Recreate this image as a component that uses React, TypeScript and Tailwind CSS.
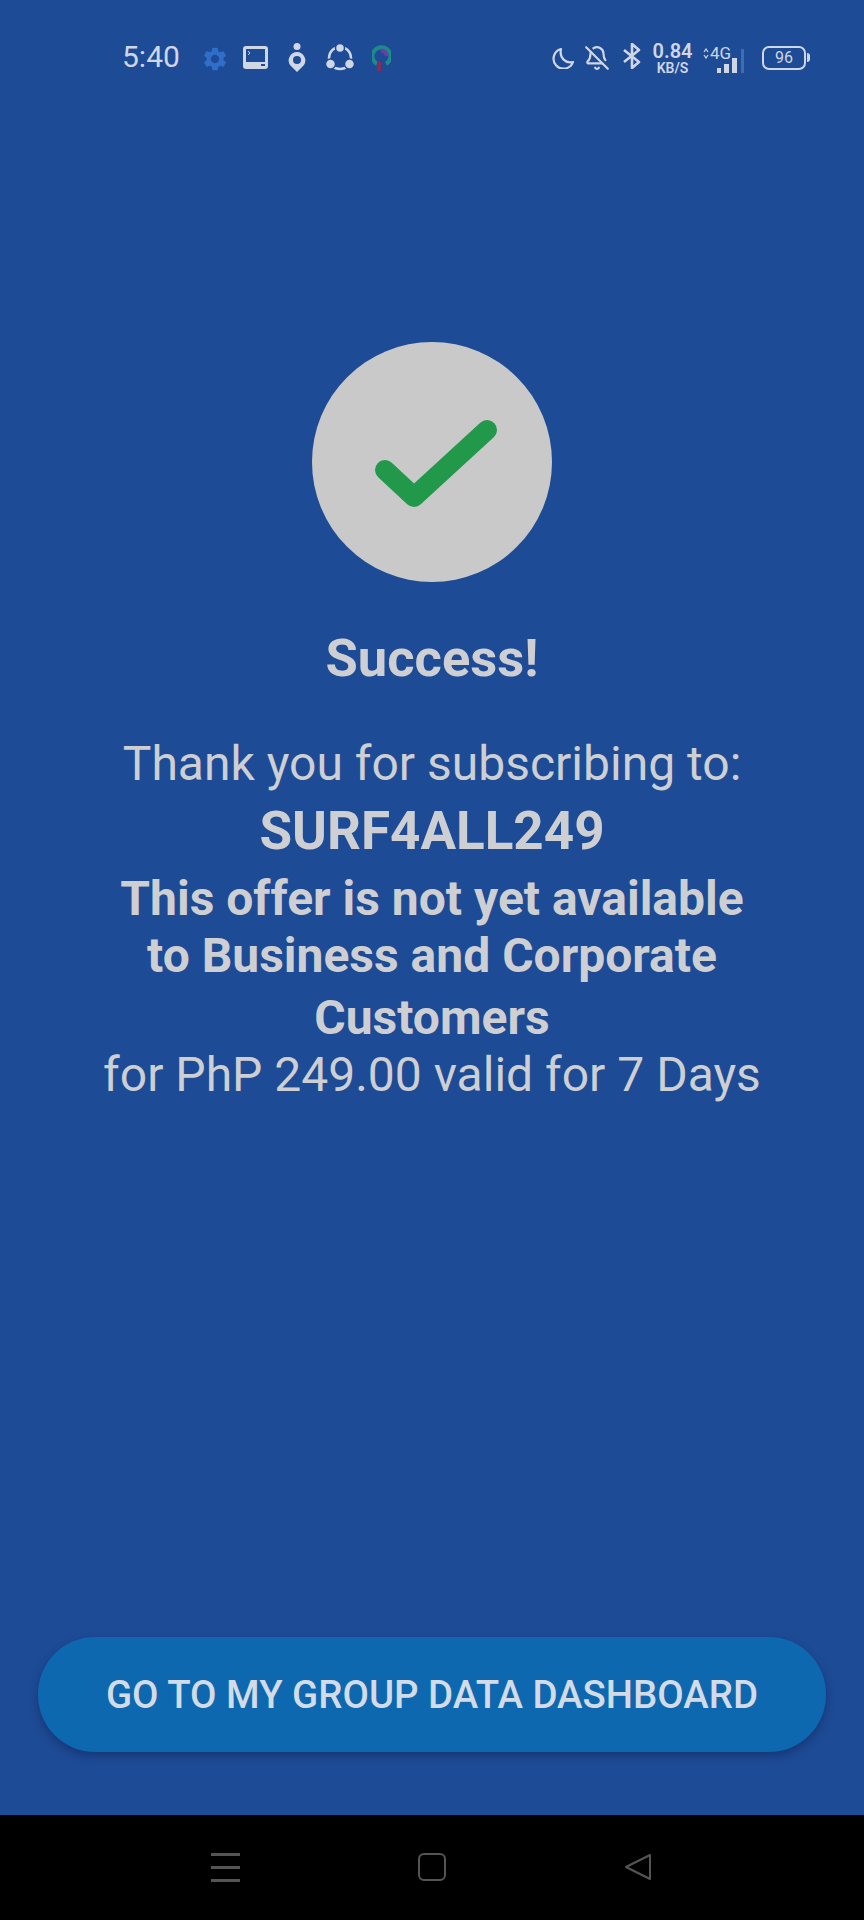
import { BellOff } from "lucide-react";
import { MdSettings } from "react-icons/md";

const StatusBar = () => (
  <div className="h-[116px] pl-[122px] pr-[54px] pt-[38px] flex justify-between text-[#cfd6e4]">
    <div className="flex items-start">
      <span className="text-[30px] leading-[38px] w-[58px]">5:40</span>
      <MdSettings className="w-[28px] h-[28px] mt-[7px] ml-[21px] text-[#2f6fc9]" />
      {/* screen icon */}
      <svg className="w-[25px] h-[23px] mt-[8px] ml-[14px]" viewBox="0 0 25 23">
        <rect width="25" height="23" rx="3" fill="#cfd6e4" />
        <rect x="3" y="3" width="19" height="13" fill="#1e4b96" />
        <path d="M5 5l2 2-2 2" stroke="#cfd6e4" fill="none" />
        <rect x="18" y="18" width="4" height="2" fill="#1e4b96" />
      </svg>
      {/* pin icon */}
      <svg className="w-[18px] h-[29px] mt-[5px] ml-[20px]" viewBox="0 0 18 29">
        <circle cx="9" cy="3.500" r="3.500" fill="#cfd6e4" />
        <path d="M9 9a8.500 8.500 0 0 1 7 13l-7 7-7-7a8.500 8.500 0 0 1 7-13z" fill="#cfd6e4" />
        <circle cx="9" cy="17" r="4" fill="#1e4b96" />
      </svg>
      {/* share icon */}
      <svg className="w-[30px] h-[28px] mt-[5px] ml-[19px]" viewBox="0 0 30 28" fill="none" stroke="#cfd6e4" strokeWidth="2.500">
        <circle cx="15" cy="15" r="11" />
        <circle cx="15" cy="5" r="4.500" fill="#cfd6e4" stroke="#1e4b96" strokeWidth="1.500" />
        <circle cx="5.500" cy="21" r="5" fill="#cfd6e4" stroke="#1e4b96" strokeWidth="1.500" />
        <circle cx="24.500" cy="21" r="5" fill="#cfd6e4" stroke="#1e4b96" strokeWidth="1.500" />
      </svg>
      {/* app logo */}
      <svg className="w-[19px] h-[29px] mt-[5px] ml-[17px]" viewBox="0 0 19 29" fill="none" strokeWidth="4">
        <path d="M5 21a9 9 0 1 1 9 0" stroke="#1f8a8c" />
        <path d="M9 8a4 4 0 0 1 5 5" stroke="#6a3fa0" />
        <path d="M7 19v9" stroke="#8a2a55" />
      </svg>
    </div>
    <div className="flex items-start">
      <svg className="w-[23px] h-[22px] mt-[9px]" viewBox="0 0 23 22" fill="none">
        <path d="M9 2a10 10 0 1 0 12 13C14 17 7 11 9 2z" stroke="#cfd6e4" strokeWidth="2.200" strokeLinejoin="round" />
      </svg>
      <BellOff className="w-[26px] h-[26px] mt-[7px] ml-[9px]" strokeWidth={2} />
      <svg className="w-[19px] h-[26px] mt-[5px] ml-[12px]" viewBox="0 0 19 26" fill="none">
        <path d="M2 7l15 12-7 6V1l7 6L2 19" stroke="#cfd6e4" strokeWidth="2.600" strokeLinejoin="round" />
      </svg>
      <div className="ml-[11px] w-[41px] flex flex-col items-center font-semibold">
        <span className="text-[20px] leading-[20px] mt-[3px]">0.84</span>
        <span className="text-[14px] leading-[13px] mt-[1px]">KB/S</span>
      </div>
      <div className="ml-[10px] w-[46px] relative h-[34px] mt-[4px]">
        <svg className="absolute left-0 top-[6px] w-[6px] h-[11px]" viewBox="0 0 6 11" fill="none" stroke="#cfd6e4" strokeWidth="1.200">
          <path d="M1 4l2-3 2 3M1 7l2 3 2-3" />
        </svg>
        <span className="absolute left-[7px] top-[2px] text-[17px] leading-[18px]">4G</span>
        <div className="absolute left-[14px] bottom-[3px] flex items-end gap-[3px]">
          <span className="w-[4px] h-[5px] bg-[#cfd6e4]" />
          <span className="w-[5px] h-[9px] bg-[#cfd6e4]" />
          <span className="w-[5px] h-[15px] bg-[#cfd6e4]" />
          <span className="w-[3px] h-[24px] ml-[1px] bg-[#3f6db3]" />
        </div>
      </div>
      <div className="ml-[13px] mt-[8px] w-[44px] h-[24px] rounded-[7px] border-2 border-[#cfd6e4] flex items-center justify-center text-[16px]">
        96
      </div>
      <span className="w-[3px] h-[9px] mt-[15px] ml-[1px] bg-[#cfd6e4] rounded-r-sm" />
    </div>
  </div>
);

const App = () => (
  <div className="w-[864px] h-[1920px] flex flex-col bg-[#1e4b96] font-['Roboto',sans-serif] overflow-hidden">
    <StatusBar />

    <div className="flex-1 flex flex-col items-center text-center text-[#cdcfd3]">
      <div className="mt-[226px] w-[240px] h-[240px] rounded-full bg-[#c9c9c9] flex items-center justify-center">
        <svg className="w-[240px] h-[240px]" viewBox="0 0 240 240" fill="none">
          <path
            d="M73 128l29 27 73-67"
            stroke="#22994a"
            strokeWidth="20"
            strokeLinecap="round"
            strokeLinejoin="round"
          />
        </svg>
      </div>

      <h1 className="mt-[47px] text-[52.5px] leading-[58px] font-bold">Success!</h1>

      <p className="mt-[49px] text-[48px] leading-[56px]">Thank you for subscribing to:</p>
      <p className="mt-[11px] text-[53px] leading-[56px] font-bold">SURF4ALL249</p>
      <p className="mt-[12px] w-[700px] text-[48px] leading-[56px] font-bold">
        This offer is not yet available
        <br />
        <span className="block mt-[1px]">to Business and Corporate</span>
        <span className="block mt-[6px]">Customers</span>
      </p>
      <p className="mt-[1px] text-[48px] leading-[56px]">for PhP 249.00 valid for 7 Days</p>

      <div className="flex-1" />

      <button className="w-[788px] h-[115px] mb-[63px] rounded-[57px] bg-[#0e68b0] text-[#d3dbe6] text-[38.4px] font-medium shadow-[0_4px_10px_rgba(10,30,80,0.45)]">
        GO TO MY GROUP DATA DASHBOARD
      </button>
    </div>

    {/* Nav bar */}
    <div className="h-[105px] bg-black flex items-start justify-center gap-[178px] pt-[38px] pr-[1px]">
      <div className="w-[29px] h-[29px] flex flex-col justify-between">
        <span className="h-[3px] bg-[#555]" />
        <span className="h-[3px] bg-[#555]" />
        <span className="h-[3px] bg-[#555]" />
      </div>
      <div className="w-[28px] h-[28px] rounded-[6px] border-2 border-[#555]" />
      <svg className="w-[28px] h-[28px]" viewBox="0 0 28 28" fill="none">
        <path d="M26 2v24L2 14z" stroke="#555" strokeWidth="2" strokeLinejoin="round" />
      </svg>
    </div>
  </div>
);

export default App;
